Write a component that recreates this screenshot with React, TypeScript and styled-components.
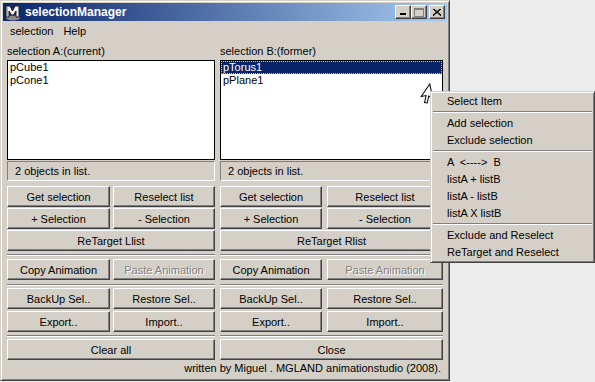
import React from "react";
import styled, { createGlobalStyle } from "styled-components";

const GlobalStyle = createGlobalStyle`
    html, body {
        margin: 0;
        padding: 0;
        background: #ececec;
        overflow: hidden;
    }
    body {
        font-family: "Liberation Sans", Arial, sans-serif;
        font-size: 11px;
        color: #000;
    }
`;

const Screen = styled.div`
    position: relative;
    width: 595px;
    height: 382px;
    overflow: hidden;
`;

const Window = styled.div`
    width: 450px;
    height: 381px;
    box-sizing: border-box;
    background: #d4d0c8;
    border: 1px solid;
    border-color: #d4d0c8 #404040 #404040 #d4d0c8;
    box-shadow: inset 1px 1px 0 #fff, inset -1px -1px 0 #808080;
    padding: 2px;
    display: flex;
    flex-direction: column;
`;

const TitleBar = styled.div`
    height: 18px;
    display: flex;
    align-items: center;
    padding: 0 2px 0 1px;
    background: linear-gradient(to right, #0a246a, #a6caf0);
`;

const Title = styled.span`
    margin-left: 4px;
    color: #fff;
    font-weight: bold;
    font-size: 12px;
`;

const CaptionGroup = styled.div`
    margin-left: auto;
    display: flex;
    align-items: center;
`;

const CaptionButton = styled.div<{ gap?: number }>`
    width: 16px;
    height: 14px;
    box-sizing: border-box;
    margin-left: ${(p) => p.gap || 0}px;
    background: #d4d0c8;
    border: 1px solid;
    border-color: #fff #404040 #404040 #fff;
    box-shadow: inset -1px -1px 0 #808080;
    display: flex;
    align-items: center;
    justify-content: center;
`;

const MenuBar = styled.div`
    height: 19px;
    display: flex;
    align-items: center;
    padding-left: 2px;
`;

const MenuBarItem = styled.span`
    padding: 0 5px;
`;

const Body = styled.div`
    padding: 0 4px;
    display: flex;
    flex-direction: column;
`;

const Columns = styled.div`
    display: grid;
    grid-template-columns: 208px 223px;
    column-gap: 5px;
`;

const Column = styled.div`
    display: flex;
    flex-direction: column;
`;

const Label = styled.div`
    height: 13px;
    line-height: 13px;
    margin-top: 5px;
    white-space: nowrap;
`;

const ListBox = styled.div`
    margin-top: 2px;
    height: 100px;
    box-sizing: border-box;
    background: #fff;
    border: 1px solid #000;
`;

const ListItem = styled.div<{ selected?: boolean }>`
    height: 13px;
    line-height: 13px;
    padding-left: 2px;
    box-sizing: border-box;
    background: ${(p) => (p.selected ? "#0a246a" : "transparent")};
    color: ${(p) => (p.selected ? "#fff" : "#000")};
    outline: ${(p) => (p.selected ? "1px dotted #c8c8c8" : "none")};
    outline-offset: -1px;
`;

const Status = styled.div`
    margin-top: 1px;
    height: 20px;
    box-sizing: border-box;
    border: 1px solid;
    border-color: #808080 #fff #fff #808080;
    padding-left: 7px;
    line-height: 18px;
`;

const ButtonGrid = styled.div<{ cols: string; colGap: number; rowGap: number; top?: number }>`
    display: grid;
    grid-template-columns: ${(p) => p.cols};
    column-gap: ${(p) => p.colGap}px;
    row-gap: ${(p) => p.rowGap}px;
    margin-top: ${(p) => p.top || 0}px;
`;

const Button = styled.div<{ wide?: boolean; disabled?: boolean }>`
    grid-column: ${(p) => (p.wide ? "1 / -1" : "auto")};
    height: 21px;
    box-sizing: border-box;
    background: #d4d0c8;
    border: 1px solid;
    border-color: #fff #404040 #404040 #fff;
    box-shadow: inset -1px -1px 0 #808080;
    display: flex;
    align-items: center;
    justify-content: center;
    white-space: nowrap;
    color: ${(p) => (p.disabled ? "#808080" : "#000")};
    text-shadow: ${(p) => (p.disabled ? "1px 1px 0 #fff" : "none")};
`;

const Separator = styled.div<{ above: number; below: number }>`
    margin: ${(p) => p.above}px 0 ${(p) => p.below}px;
    border-top: 1px solid #808080;
    border-bottom: 1px solid #fff;
`;

const Footer = styled.div`
    margin-top: 2px;
    height: 13px;
    line-height: 13px;
    text-align: right;
    padding-right: 2px;
`;

const ContextMenu = styled.div`
    position: absolute;
    left: 430px;
    top: 91px;
    width: 165px;
    box-sizing: border-box;
    background: #d4d0c8;
    border: 1px solid;
    border-color: #d4d0c8 #404040 #404040 #d4d0c8;
    box-shadow: inset 1px 1px 0 #fff, inset -1px -1px 0 #808080;
    padding: 1px;
`;

const ContextItem = styled.div`
    height: 17px;
    line-height: 17px;
    padding-left: 15px;
    white-space: pre;
`;

const ContextSeparator = styled.div`
    margin: 1px 1px 2px;
    border-top: 1px solid #808080;
    border-bottom: 1px solid #fff;
`;

const Cursor = styled.svg`
    position: absolute;
    left: 416px;
    top: 83px;
`;

const MayaIcon = () => (
    <svg width="17" height="17" viewBox="0 0 17 17">
        <ellipse cx="9" cy="14" rx="7" ry="2.5" fill="#8a8a8a" />
        <polygon
            points="2,2 6,2 8.5,7 11,2 15,2 15,13 12,13 12,7 9.5,11 7.5,11 5,7 5,13 2,13"
            fill="#f0f0f0"
            stroke="#202020"
            strokeWidth="1"
        />
        <line x1="3.5" y1="3" x2="3.5" y2="12" stroke="#b0b0b0" />
    </svg>
);

const App = () => {
    return (
        <Screen>
            <GlobalStyle />
            <Window>
                <TitleBar>
                    <MayaIcon />
                    <Title>selectionManager</Title>
                    <CaptionGroup>
                        <CaptionButton>
                            <svg width="8" height="8" viewBox="0 0 8 8">
                                <rect x="1" y="5" width="6" height="2" fill="#000" />
                            </svg>
                        </CaptionButton>
                        <CaptionButton>
                            <svg width="10" height="9" viewBox="0 0 10 9">
                                <rect x="0.5" y="0.5" width="9" height="8" fill="none" stroke="#808080" />
                                <line x1="0" y1="1.5" x2="10" y2="1.5" stroke="#808080" />
                            </svg>
                        </CaptionButton>
                        <CaptionButton gap={2}>
                            <svg width="8" height="7" viewBox="0 0 8 7">
                                <path d="M0 0 L8 7 M1 0 L8 6 M8 0 L0 7 M7 0 L0 6" stroke="#000" strokeWidth="1" />
                            </svg>
                        </CaptionButton>
                    </CaptionGroup>
                </TitleBar>

                <MenuBar>
                    <MenuBarItem>selection</MenuBarItem>
                    <MenuBarItem>Help</MenuBarItem>
                </MenuBar>

                <Body>
                    <Columns>
                        <Column>
                            <Label>selection A:(current)</Label>
                            <ListBox>
                                <ListItem>pCube1</ListItem>
                                <ListItem>pCone1</ListItem>
                            </ListBox>
                            <Status>2 objects in list.</Status>
                            <ButtonGrid cols="103px 102px" colGap={3} rowGap={1} top={5}>
                                <Button>Get selection</Button>
                                <Button>Reselect list</Button>
                                <Button>+ Selection</Button>
                                <Button>- Selection</Button>
                                <Button wide>ReTarget Llist</Button>
                            </ButtonGrid>
                            <Separator above={3} below={3} />
                            <ButtonGrid cols="103px 102px" colGap={3} rowGap={2}>
                                <Button>Copy Animation</Button>
                                <Button disabled>Paste Animation</Button>
                            </ButtonGrid>
                            <Separator above={4} below={2} />
                            <ButtonGrid cols="103px 102px" colGap={3} rowGap={2}>
                                <Button>BackUp Sel..</Button>
                                <Button>Restore Sel..</Button>
                                <Button>Export..</Button>
                                <Button>Import..</Button>
                            </ButtonGrid>
                            <Separator above={3} below={2} />
                            <ButtonGrid cols="1fr" colGap={0} rowGap={0}>
                                <Button>Clear all</Button>
                            </ButtonGrid>
                        </Column>

                        <Column>
                            <Label>selection B:(former)</Label>
                            <ListBox>
                                <ListItem selected>pTorus1</ListItem>
                                <ListItem>pPlane1</ListItem>
                            </ListBox>
                            <Status>2 objects in list.</Status>
                            <ButtonGrid cols="102px 116px" colGap={5} rowGap={1} top={5}>
                                <Button>Get selection</Button>
                                <Button>Reselect list</Button>
                                <Button>+ Selection</Button>
                                <Button>- Selection</Button>
                                <Button wide>ReTarget Rlist</Button>
                            </ButtonGrid>
                            <Separator above={3} below={3} />
                            <ButtonGrid cols="102px 116px" colGap={5} rowGap={2}>
                                <Button>Copy Animation</Button>
                                <Button disabled>Paste Animation</Button>
                            </ButtonGrid>
                            <Separator above={4} below={2} />
                            <ButtonGrid cols="102px 116px" colGap={5} rowGap={2}>
                                <Button>BackUp Sel..</Button>
                                <Button>Restore Sel..</Button>
                                <Button>Export..</Button>
                                <Button>Import..</Button>
                            </ButtonGrid>
                            <Separator above={3} below={2} />
                            <ButtonGrid cols="1fr" colGap={0} rowGap={0}>
                                <Button>Close</Button>
                            </ButtonGrid>
                        </Column>
                    </Columns>
                    <Footer>written by Miguel . MGLAND animationstudio (2008).</Footer>
                </Body>
            </Window>

            <Cursor width="18" height="22" viewBox="0 0 18 22">
                <g transform="rotate(-12 14 2)">
                    <polygon
                        points="14,1 14,16 10.5,12.5 7.5,19 5,18 8,11.5 3,11.5"
                        fill="#fff"
                        stroke="#000"
                        strokeWidth="1"
                    />
                </g>
            </Cursor>

            <ContextMenu>
                <ContextItem>Select Item</ContextItem>
                <ContextSeparator />
                <ContextItem>Add selection</ContextItem>
                <ContextItem>Exclude selection</ContextItem>
                <ContextSeparator />
                <ContextItem>{"A  <---->  B"}</ContextItem>
                <ContextItem>listA + listB</ContextItem>
                <ContextItem>listA - listB</ContextItem>
                <ContextItem>listA X listB</ContextItem>
                <ContextSeparator />
                <ContextItem>Exclude and Reselect</ContextItem>
                <ContextItem>ReTarget and Reselect</ContextItem>
            </ContextMenu>
        </Screen>
    );
};

export default App;
